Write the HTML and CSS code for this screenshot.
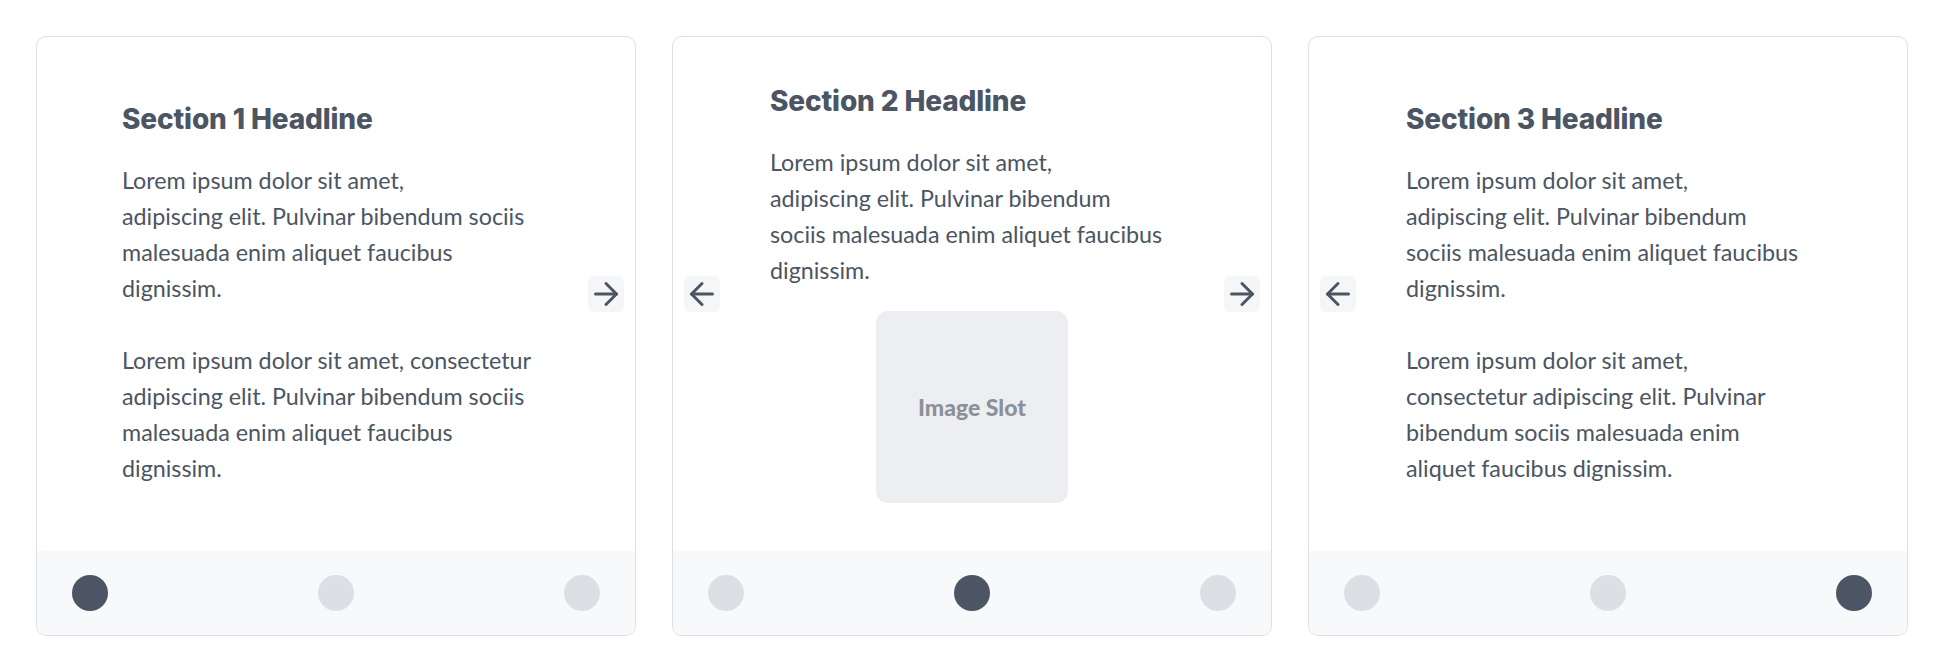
FILE: index.html
```html
<!DOCTYPE html>
<html lang="en">
<head>
<meta charset="utf-8">
<title>Carousel sections</title>
<link rel="stylesheet" href="styles.css">
</head>
<body>
<main class="row">
  <section class="card">
    <div class="card-body">
      <div class="content content--wide">
        <h2 class="headline">Section 1 Headline</h2>
        <p class="text">Lorem ipsum dolor sit amet,<br>adipiscing elit. Pulvinar bibendum sociis<br>malesuada enim aliquet faucibus<br>dignissim.</p>
        <p class="text">Lorem ipsum dolor sit amet, consectetur<br>adipiscing elit. Pulvinar bibendum sociis<br>malesuada enim aliquet faucibus<br>dignissim.</p>
      </div>
      <button class="nav nav--next" aria-label="Next">
        <svg viewBox="0 0 24 24" width="36" height="36" fill="none" stroke="currentColor" stroke-width="2" stroke-linecap="round" stroke-linejoin="round"><path d="M5 12h14"/><path d="M12 5l7 7-7 7"/></svg>
      </button>
    </div>
    <div class="dots">
      <span class="dot dot--active"></span>
      <span class="dot"></span>
      <span class="dot"></span>
    </div>
  </section>

  <section class="card">
    <div class="card-body">
      <button class="nav nav--prev" aria-label="Previous">
        <svg viewBox="0 0 24 24" width="36" height="36" fill="none" stroke="currentColor" stroke-width="2" stroke-linecap="round" stroke-linejoin="round"><path d="M19 12H5"/><path d="M12 19l-7-7 7-7"/></svg>
      </button>
      <div class="content">
        <h2 class="headline">Section 2 Headline</h2>
        <p class="text">Lorem ipsum dolor sit amet,<br>adipiscing elit. Pulvinar bibendum<br>sociis malesuada enim aliquet faucibus<br>dignissim.</p>
        <div class="image-slot">Image Slot</div>
      </div>
      <button class="nav nav--next" aria-label="Next">
        <svg viewBox="0 0 24 24" width="36" height="36" fill="none" stroke="currentColor" stroke-width="2" stroke-linecap="round" stroke-linejoin="round"><path d="M5 12h14"/><path d="M12 5l7 7-7 7"/></svg>
      </button>
    </div>
    <div class="dots">
      <span class="dot"></span>
      <span class="dot dot--active"></span>
      <span class="dot"></span>
    </div>
  </section>

  <section class="card">
    <div class="card-body">
      <button class="nav nav--prev" aria-label="Previous">
        <svg viewBox="0 0 24 24" width="36" height="36" fill="none" stroke="currentColor" stroke-width="2" stroke-linecap="round" stroke-linejoin="round"><path d="M19 12H5"/><path d="M12 19l-7-7 7-7"/></svg>
      </button>
      <div class="content">
        <h2 class="headline">Section 3 Headline</h2>
        <p class="text">Lorem ipsum dolor sit amet,<br>adipiscing elit. Pulvinar bibendum<br>sociis malesuada enim aliquet faucibus<br>dignissim.</p>
        <p class="text">Lorem ipsum dolor sit amet,<br>consectetur adipiscing elit. Pulvinar<br>bibendum sociis malesuada enim<br>aliquet faucibus dignissim.</p>
      </div>
    </div>
    <div class="dots">
      <span class="dot"></span>
      <span class="dot"></span>
      <span class="dot dot--active"></span>
    </div>
  </section>
</main>
</body>
</html>
```

FILE: styles.css
```css
* { box-sizing: border-box; }

html, body {
  margin: 0;
  background: #ffffff;
}

body {
  font-family: "Lato", "Liberation Sans", sans-serif;
  color: #4b5563;
}

.row {
  display: flex;
  gap: 36px;
  padding: 36px;
}

.card {
  width: 600px;
  height: 600px;
  flex: none;
  display: flex;
  flex-direction: column;
  border: 1px solid #dcdfe5;
  border-radius: 10px;
  overflow: hidden;
  background: #ffffff;
}

.card-body {
  position: relative;
  flex: 1;
  display: flex;
  align-items: center;
  justify-content: center;
  padding-bottom: 2px;
}

.content {
  width: 404px;
}

.content--wide {
  width: 428px;
}

.headline {
  margin: 0 0 25px;
  font-family: "Inter", "Liberation Sans", sans-serif;
  font-weight: 800;
  font-size: 28px;
  line-height: 36px;
  letter-spacing: -0.005em;
  color: #4b5563;
}

.text {
  margin: 0;
  font-size: 23.3px;
  line-height: 36px;
  white-space: nowrap;
}

.text + .text {
  margin-top: 36px;
}

.image-slot {
  width: 192px;
  height: 192px;
  margin: 23px auto 0;
  border-radius: 12px;
  background: #edeef1;
  display: flex;
  align-items: center;
  justify-content: center;
  font-weight: 900;
  font-size: 23px;
  color: #8b919a;
}

.nav {
  position: absolute;
  top: 50%;
  transform: translateY(-50%);
  width: 36px;
  height: 36px;
  padding: 0;
  border: none;
  border-radius: 6px;
  background: #f5f6f8;
  color: #4b5563;
  display: flex;
  align-items: center;
  justify-content: center;
}

.nav svg { display: block; }

.nav--prev { left: 11px; }
.nav--next { right: 11px; }

.dots {
  flex: none;
  height: 84px;
  padding: 0 35px;
  display: flex;
  align-items: center;
  justify-content: space-between;
  background: #f8f9fa;
}

.dot {
  width: 36px;
  height: 36px;
  border-radius: 50%;
  background: #dcdfe4;
}

.dot--active {
  background: #4b5563;
}
```
